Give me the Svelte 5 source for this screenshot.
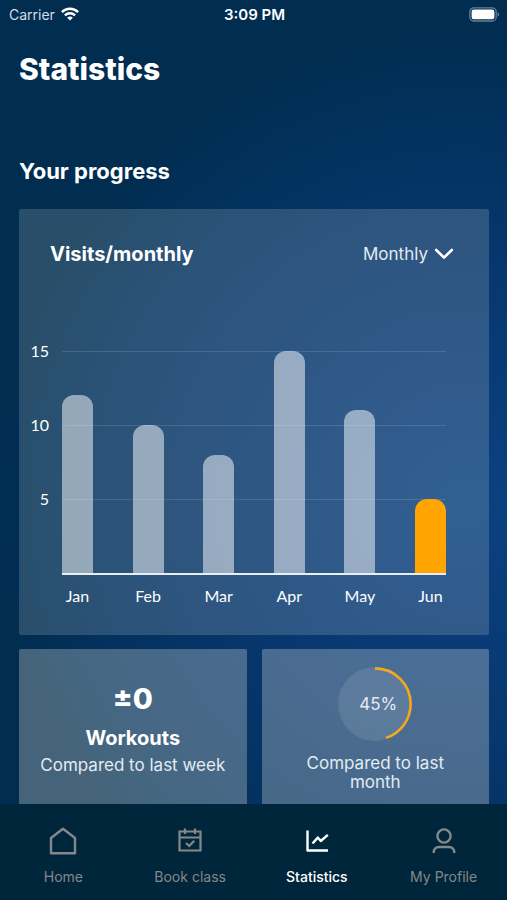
<script>
  const max = 15;
  const ticks = [15, 10, 5];
  const visits = [
    { month: 'Jan', count: 12 },
    { month: 'Feb', count: 10 },
    { month: 'Mar', count: 8 },
    { month: 'Apr', count: 15 },
    { month: 'May', count: 11 },
    { month: 'Jun', count: 5, current: true }
  ];
  let period = $state('Monthly');
</script>

<div class="app">
  <header class="status">
    <span class="carrier">
      Carrier
      <svg width="18" height="14" viewBox="0 0 18 14" fill="none" stroke="#fff" stroke-width="2.4" aria-hidden="true">
        <path d="M0.9 5.1C5.4 0.7 12.6 0.7 17.1 5.1" />
        <path d="M3.9 8.3C6.8 5.5 11.2 5.5 14.1 8.3" />
        <path d="M9 13.6L6.1 10.7C7.7 9.2 10.3 9.2 11.9 10.7Z" fill="#fff" stroke="none" />
      </svg>
    </span>
    <time>3:09 PM</time>
    <svg class="battery" width="31" height="15" viewBox="0 0 31 15" aria-hidden="true">
      <rect x="0.8" y="0.8" width="26.4" height="13.2" rx="4" fill="none" stroke="#fff" stroke-opacity="0.4" stroke-width="1.3" />
      <rect x="2.6" y="2.6" width="22.8" height="9.6" rx="2.2" fill="#fff" />
      <path d="M28.6 5.2C30.6 5.9 30.6 8.9 28.6 9.6Z" fill="#fff" fill-opacity="0.4" />
    </svg>
  </header>

  <main>
    <h1>Statistics</h1>
    <h2>Your progress</h2>

    <section class="card chart">
      <div class="chart-head">
        <h3>Visits/monthly</h3>
        <div class="picker">
          <select aria-label="Period" bind:value={period}>
            <option>Monthly</option>
            <option>Weekly</option>
          </select>
          <svg width="20" height="12" viewBox="0 0 20 12" fill="none" stroke="#fff" stroke-width="2.6" stroke-linecap="round" stroke-linejoin="round" aria-hidden="true">
            <path d="M2.2 2L10 9.6L17.8 2" />
          </svg>
        </div>
      </div>

      <div class="graph">
        <div class="scale">
          {#each ticks as tick}
            <span>{tick}</span>
          {/each}
        </div>
        <div class="plot">
          <div class="lines">
            {#each ticks as tick (tick)}
              <i></i>
            {/each}
          </div>
          <div class="bars">
            {#each visits as v}
              <div class="bar" class:current={v.current} style="height: {(v.count / max) * 100}%"></div>
            {/each}
          </div>
        </div>
        <div class="months">
          {#each visits as v}
            <span>{v.month}</span>
          {/each}
        </div>
      </div>
    </section>

    <div class="pair">
      <section class="card tile workouts">
        <strong class="delta">±0</strong>
        <h3>Workouts</h3>
        <p>Compared to last week</p>
      </section>
      <section class="card tile share">
        <div class="ring">
          <svg width="74" height="74" viewBox="0 0 74 74" aria-hidden="true">
            <circle cx="37" cy="37" r="37" fill="#fff" fill-opacity="0.1" />
            <circle cx="37" cy="37" r="35.6" fill="none" stroke="#f5a81c" stroke-width="2.6" pathLength="100" stroke-dasharray="45 100" transform="rotate(-90 37 37)" />
          </svg>
          <span>45%</span>
        </div>
        <p>Compared to last month</p>
      </section>
    </div>
  </main>

  <nav>
    <a href="#home">
      <svg width="28" height="28" viewBox="0 0 28 28" fill="none" stroke="currentColor" stroke-width="2.4" stroke-linejoin="round" aria-hidden="true">
        <path d="M2 11L14 1.8L26 11V26.2H2Z" />
      </svg>
      Home
    </a>
    <a href="#book">
      <svg width="28" height="28" viewBox="0 0 28 28" fill="none" stroke="currentColor" stroke-width="2.2" aria-hidden="true">
        <path d="M3.5 4.5H24.5V23.5H3.5ZM3.5 10.5H24.5M9 1.5V7M19 1.5V7" />
        <path d="M10 16L13.2 19L18.2 13.8" stroke-width="2.2" />
      </svg>
      Book class
    </a>
    <a href="#statistics" class="active" aria-current="page">
      <svg width="28" height="28" viewBox="0 0 28 28" fill="none" stroke="currentColor" stroke-width="2.4" stroke-linejoin="round" aria-hidden="true">
        <path d="M4.5 3.5V23.5H25" />
        <path d="M9.5 16.5L14.8 10.6L17.8 14L24.8 7.8" />
      </svg>
      Statistics
    </a>
    <a href="#profile">
      <svg width="28" height="28" viewBox="0 0 28 28" fill="none" stroke="currentColor" stroke-width="2.4" aria-hidden="true">
        <circle cx="14" cy="9" r="6.6" />
        <path d="M3.8 26V25C3.8 22 6 20 9 20H19C22 20 24.2 22 24.2 25V26" />
      </svg>
      My Profile
    </a>
  </nav>
</div>

<style>
  :global(body) {
    background: #002d50;
  }

  .app {
    display: flex;
    flex-direction: column;
    height: 100vh;
    color: #fff;
    font-family: Inter, 'Liberation Sans', sans-serif;
    background: radial-gradient(ellipse 92% 52% at 92% 56%, #0b4280 0%, #073870 45%, #03325f 80%, #002d50 100%) #002d50;
  }

  h1, h2, h3, p {
    margin: 0;
  }

  .status {
    display: grid;
    grid-template-columns: 1fr auto 1fr;
    align-items: center;
    height: 28px;
    padding: 0 7px 0 9px;
    font-size: 14px;
  }

  .carrier {
    display: flex;
    align-items: center;
    gap: 6px;
    color: #d5dde5;
  }

  time {
    font-size: 15px;
    font-weight: 600;
  }

  .battery {
    justify-self: end;
  }

  main {
    flex: 1;
    min-height: 0;
    overflow-y: auto;
    scrollbar-width: none;
    padding: 24px 18px 0 19px;
  }

  h1 {
    font-size: 30px;
    line-height: 34px;
    font-weight: 800;
  }

  h2 {
    margin: 72px 0 24px;
    font-size: 22px;
    line-height: 27px;
    font-weight: 700;
  }

  h3 {
    font-size: 20px;
    line-height: 24px;
    font-weight: 700;
  }

  .card {
    border-radius: 2px;
    background: rgba(250, 250, 245, 0.165);
  }

  .chart {
    padding-bottom: 29px;
  }

  .chart-head {
    display: flex;
    justify-content: space-between;
    align-items: center;
    padding: 33px 35px 0 31px;
  }

  .picker {
    display: flex;
    align-items: center;
    position: relative;
  }

  .picker select {
    appearance: none;
    margin: 0;
    padding: 0 26px 0 0;
    border: 0;
    background: none;
    color: #e3ebf3;
    font: 17px/24px Inter, 'Liberation Sans', sans-serif;
  }

  .picker option {
    color: #002d50;
  }

  .picker svg {
    position: absolute;
    right: 0;
    pointer-events: none;
  }

  .graph {
    display: grid;
    grid-template-columns: 30px 1fr;
    column-gap: 13px;
    padding: 85px 43px 0 0;
    font: 16px/20px Lato, 'Liberation Sans', sans-serif;
  }

  .scale {
    display: grid;
    grid-auto-rows: 74px;
    margin-top: -10px;
    text-align: right;
    height: 222px;
  }

  .plot {
    display: grid;
    height: 222px;
    border-bottom: 2px solid #e8eef4;
  }

  .lines, .bars {
    grid-area: 1 / 1;
    display: flex;
  }

  .lines {
    flex-direction: column;
  }

  .lines i {
    flex: 1;
    border-top: 1px solid rgba(190, 215, 240, 0.17);
  }

  .bars {
    align-items: flex-end;
    justify-content: space-between;
  }

  .bar {
    width: 31px;
    border-radius: 12px 12px 0 0;
    background: rgba(255, 255, 255, 0.5);
  }

  .bar.current {
    background: #ffa400;
  }

  .months {
    grid-column: 2;
    display: flex;
    justify-content: space-between;
    margin-top: 11px;
  }

  .months span {
    display: flex;
    justify-content: center;
    width: 31px;
  }

  .pair {
    display: grid;
    grid-template-columns: 1fr 1fr;
    gap: 15px;
    margin-top: 14px;
  }

  .tile {
    display: flex;
    flex-direction: column;
    align-items: center;
    min-height: 170px;
    box-sizing: border-box;
    background: rgba(255, 250, 242, 0.27);
    text-align: center;
  }

  .tile p {
    color: #e3ebf3;
    font-size: 17px;
    line-height: 19px;
  }

  .workouts {
    padding-top: 33px;
  }

  .workouts p {
    margin-top: 6px;
  }

  .delta {
    margin-bottom: 10px;
    font-size: 29px;
    line-height: 34px;
    font-weight: 800;
  }

  .share {
    padding: 18px 36px 0;
  }

  .share p {
    margin-top: 13px;
  }

  .ring {
    display: grid;
    place-items: center;
    font-size: 17px;
    color: #e3ebf3;
  }

  .ring > * {
    grid-area: 1 / 1;
  }

  .ring span {
    padding-left: 6px;
  }

  nav {
    display: grid;
    grid-template-columns: repeat(4, 1fr);
    height: 96px;
    background: #00263b;
  }

  nav a {
    display: flex;
    flex-direction: column;
    align-items: center;
    gap: 13px;
    padding-top: 23px;
    color: #858888;
    font-size: 14px;
    line-height: 17px;
    text-decoration: none;
  }

  nav a.active {
    color: #fff;
    font-weight: 500;
  }
</style>
